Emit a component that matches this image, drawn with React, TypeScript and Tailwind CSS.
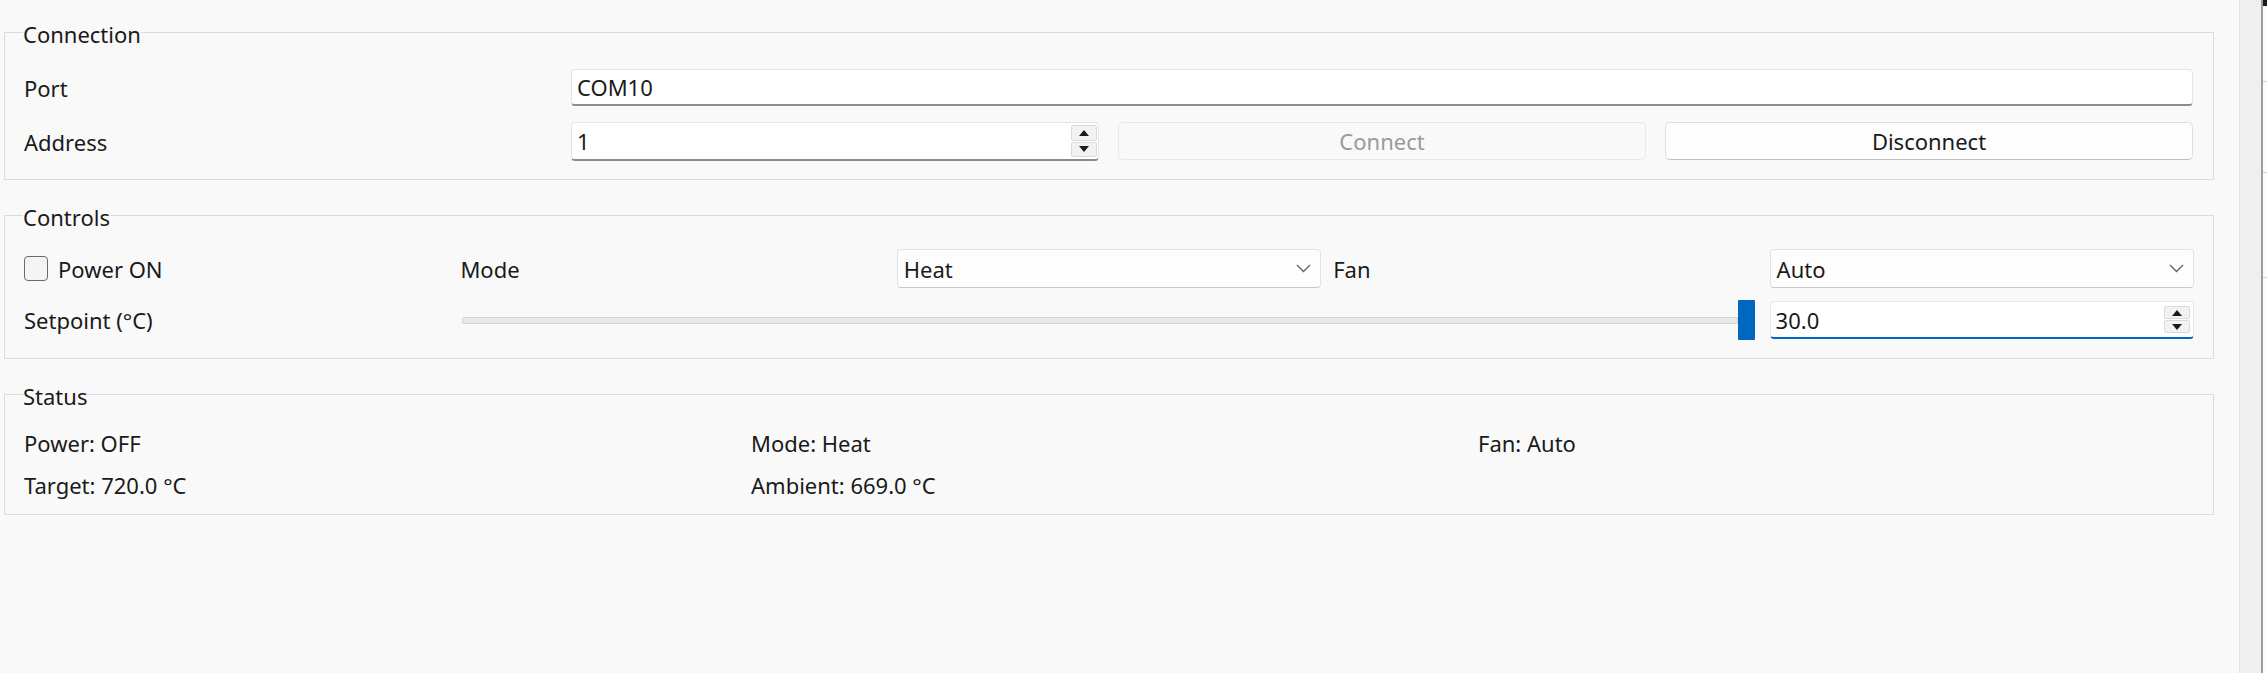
import React from "react";

function UpDown({ h = 28 }: { h?: number }) {
  return (
    <div className="flex w-[26px] flex-col gap-[1px]" style={{ height: h }}>
      <div className="flex flex-1 items-center justify-center rounded-[2px] border border-[#dadada] bg-[#f2f2f2]">
        <svg width="10" height="6" viewBox="0 0 10 6">
          <path d="M5 0 L10 6 L0 6 Z" fill="#1b1b1b" />
        </svg>
      </div>
      <div className="flex flex-1 items-center justify-center rounded-[2px] border border-[#dadada] bg-[#f2f2f2]">
        <svg width="10" height="6" viewBox="0 0 10 6">
          <path d="M0 0 L10 0 L5 6 Z" fill="#1b1b1b" />
        </svg>
      </div>
    </div>
  );
}

function Chevron() {
  return (
    <svg width="15" height="9" viewBox="0 0 15 9" className="shrink-0">
      <path d="M1 1 L7.5 7.5 L14 1" fill="none" stroke="#606060" strokeWidth="1.3" />
    </svg>
  );
}

function Combo({ value }: { value: string }) {
  return (
    <div className="flex h-[39px] items-center justify-between rounded-[4px] border border-[#e2e2e2] border-b-[#c9c9c9] bg-[#fdfdfd] pl-[6px] pr-[9px]">
      <span>{value}</span>
      <Chevron />
    </div>
  );
}

export default function App() {
  return (
    <div className="flex h-[673px] w-[2267px] overflow-hidden bg-[#f9f9f9] text-[22px] leading-[28px] text-[#1a1a1a] [font-family:'Noto_Sans','Open_Sans',sans-serif]">
      <main className="flex w-[2239px] shrink-0 flex-col gap-[19px] pl-[4px] pr-[25px] pt-[16px]">
        {/* Connection */}
        <fieldset className="border border-[#dcdcdc] pb-[18px] pl-[19px] pr-[20px] pt-[20px]">
          <legend className="-ml-[1px] pt-[4px] leading-[28px]">Connection</legend>
          <div className="grid grid-cols-4 items-center gap-x-[19px] gap-y-[15px]">
            <div className="flex h-[39px] items-center">Port</div>
            <div className="col-span-3 flex h-[37px] items-center rounded-[4px] border border-[#e4e4e4] border-b-2 border-b-[#8c8c8c] bg-white pl-[5px]">
              COM10
            </div>
            <div className="flex h-[39px] items-center">Address</div>
            <div className="flex h-[39px] items-center justify-between rounded-[4px] border border-[#e4e4e4] border-b-2 border-b-[#8c8c8c] bg-white pl-[5px] pr-[1px]">
              <span>1</span>
              <UpDown h={32} />
            </div>
            <button
              disabled
              className="h-[38px] self-start rounded-[5px] border border-[#e8e8e8] bg-[#f9f9f9] text-[#9a9a9a]"
            >
              Connect
            </button>
            <button className="h-[38px] self-start rounded-[5px] border border-[#dedede] border-b-[#bdbdbd] bg-[#fdfdfd] text-[#1a1a1a]">
              Disconnect
            </button>
          </div>
        </fieldset>

        {/* Controls */}
        <fieldset className="border border-[#dcdcdc] pb-[18px] pl-[19px] pr-[19px] pt-[18px]">
          <legend className="-ml-[1px] pt-[4px] leading-[28px]">Controls</legend>
          <div className="grid grid-cols-5 items-center gap-x-[12px] gap-y-[12px]">
            <div className="flex h-[39px] items-center gap-[10px]">
              <div className="h-[25px] w-[24px] rounded-[4px] border border-[#6a6a6a] bg-[#f4f4f4]" />
              <span>Power ON</span>
            </div>
            <div className="flex h-[39px] items-center">Mode</div>
            <Combo value="Heat" />
            <div className="flex h-[39px] items-center">Fan</div>
            <Combo value="Auto" />

            <div className="flex h-[40px] items-center">Setpoint (°C)</div>
            <div className="col-span-3 flex h-[40px] items-center pl-[2px] pr-[3px]">
              <div className="h-[7px] flex-1 rounded-l-[2px] border border-[#d4d4d4] bg-[#e9e9e9]" />
              <div className="h-[40px] w-[17px] rounded-[1px] bg-[#0067c0]" />
            </div>
            <div className="flex h-[38px] items-center justify-between rounded-[4px] border border-[#e3e7ee] border-b-2 border-b-[#0067c0] bg-white pl-[5px] pr-[3px]">
              <span>30.0</span>
              <UpDown h={27} />
            </div>
          </div>
        </fieldset>

        {/* Status */}
        <fieldset className="border border-[#dcdcdc] pb-[15px] pl-[19px] pr-[20px] pt-[19px]">
          <legend className="-ml-[1px] pt-[4px] leading-[28px]">Status</legend>
          <div className="grid grid-cols-3 gap-x-[12px] gap-y-[14px]">
            <div>Power: OFF</div>
            <div>Mode: Heat</div>
            <div>Fan: Auto</div>
            <div>Target: 720.0 °C</div>
            <div>Ambient: 669.0 °C</div>
            <div />
          </div>
        </fieldset>
      </main>

      {/* right edge strip */}
      <div className="w-[22px] shrink-0 border-l border-[#e2e2e2] bg-[#efefef]" />
      <div className="w-[2px] shrink-0 bg-[#9c9c9c]" />
      <div className="flex flex-1 flex-col bg-[#fbfbfb]">
        <div className="h-[6px] bg-[#1a1a1a]" />
        <div className="mt-[75px] h-[1px] bg-[#d0d0d0]" />
        <div className="mt-[90px] h-[1px] bg-[#d0d0d0]" />
        <div className="mt-[104px] h-[1px] bg-[#d0d0d0]" />
      </div>
    </div>
  );
}
